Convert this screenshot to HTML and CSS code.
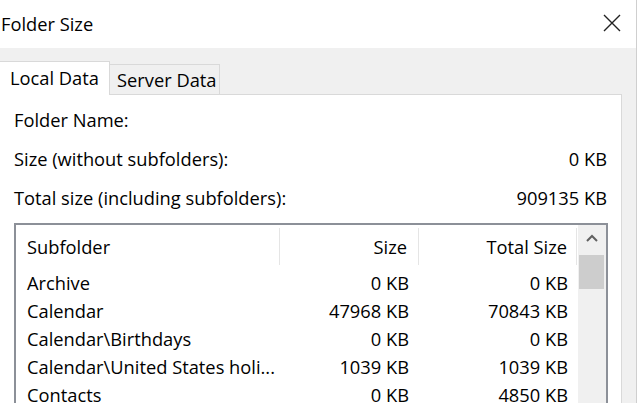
FILE: index.html
```html
<!DOCTYPE html>
<html>
<head>
<meta charset="utf-8">
<link rel="stylesheet" href="styles.css">
</head>
<body>
<div class="window">
  <div class="titlebar">
    <span class="title">Folder Size</span>
    <svg class="close" width="18" height="18" viewBox="0 0 18 18"><path d="M1 1 L17 17 M17 1 L1 17" stroke="#222" stroke-width="1.4" fill="none"/></svg>
  </div>
  <div class="body">
    <div class="tabs">
      <div class="tab active">Local Data</div>
      <div class="tab">Server Data</div>
    </div>
    <div class="panel">
      <div class="info">
        <div class="info-row"><span>Folder Name:</span><span></span></div>
        <div class="info-row"><span>Size (without subfolders):</span><span>0 KB</span></div>
        <div class="info-row"><span>Total size (including subfolders):</span><span>909135 KB</span></div>
      </div>
      <div class="list">
        <div class="table">
          <div class="row head">
            <div class="cell name">Subfolder</div>
            <div class="cell num">Size</div>
            <div class="cell num total">Total Size</div>
          </div>
          <div class="row"><div class="cell name">Archive</div><div class="cell num">0 KB</div><div class="cell num total">0 KB</div></div>
          <div class="row"><div class="cell name">Calendar</div><div class="cell num">47968 KB</div><div class="cell num total">70843 KB</div></div>
          <div class="row"><div class="cell name">Calendar\Birthdays</div><div class="cell num">0 KB</div><div class="cell num total">0 KB</div></div>
          <div class="row"><div class="cell name">Calendar\United States holi...</div><div class="cell num">1039 KB</div><div class="cell num total">1039 KB</div></div>
          <div class="row"><div class="cell name">Contacts</div><div class="cell num">0 KB</div><div class="cell num total">4850 KB</div></div>
        </div>
        <div class="scrollbar">
          <div class="arrow"><svg width="12" height="8" viewBox="0 0 12 8"><path d="M1 7 L6 2 L11 7" stroke="#606060" stroke-width="2" fill="none"/></svg></div>
          <div class="thumb"></div>
        </div>
      </div>
    </div>
  </div>
</div>
</body>
</html>
```
FILE: styles.css
```css
html, body {
  margin: 0;
  padding: 0;
  background: #f0f0f0;
}
body {
  font-family: "Open Sans", "Noto Sans", sans-serif;
  font-size: 18.3px;
  font-weight: 500;
  color: #000;
}
.window {
  width: 636px;
  height: 403px;
  border-right: 1px solid #cfcfcf;
  overflow: hidden;
  display: flex;
  flex-direction: column;
}
.titlebar {
  height: 48px;
  flex: none;
  background: #fff;
  display: flex;
  align-items: center;
  justify-content: space-between;
  padding: 0 15px 1px 1px;
  box-sizing: border-box;
}
.title {
  font-size: 18.3px;
}
.close {
  display: block;
  margin-top: -2px;
}
.body {
  flex: 1;
  padding: 13px 14px 0 0;
  display: flex;
  flex-direction: column;
}
.tabs {
  display: flex;
  align-items: flex-end;
}
.tab {
  box-sizing: border-box;
  width: 110px;
  height: 30px;
  border: 1px solid #d9d9d9;
  border-bottom: none;
  border-left: none;
  padding-left: 7px;
  display: flex;
  align-items: center;
  background: #f0f0f0;
}
.tab.active {
  height: 34px;
  background: #fff;
  padding-left: 10px;
  margin-bottom: -1px;
  position: relative;
  z-index: 1;
  padding-bottom: 2px;
}
.panel {
  flex: 1;
  background: #fff;
  border-top: 1px solid #d9d9d9;
  border-right: 1px solid #d9d9d9;
  padding: 5px 13px 0 14px;
}
.info-row {
  height: 39px;
  display: flex;
  align-items: center;
  justify-content: space-between;
  padding-right: 1px;
}
.list {
  margin-top: 6px;
  border: 2px solid #8c9098;
  border-bottom: none;
  margin-left: 0;
  display: flex;
  height: 300px;
}
.table {
  flex: 1;
}
.row {
  display: grid;
  grid-template-columns: 264px 139px 158px;
  height: 28px;
  align-items: center;
}
.row.head {
  height: 43px;
}
.cell {
  padding: 0 10px 0 11px;
  white-space: nowrap;
}
.num {
  text-align: right;
}
.total {
  padding-right: 9px;
}
.head .cell {
  height: 37px;
  display: flex;
  align-items: center;
  border-right: 1px solid #e5e5e5;
}
.head .num {
  justify-content: flex-end;
  padding-right: 11px;
}
.head .total {
  padding-right: 9px;
}
.scrollbar {
  width: 28px;
  background: #f0f0f0;
  display: flex;
  flex-direction: column;
  align-items: center;
}
.arrow {
  height: 30px;
  display: flex;
  align-items: center;
  justify-content: center;
  width: 100%;
}
.arrow svg {
  display: block;
  margin-top: -4px;
}
.thumb {
  width: 25px;
  height: 34px;
  background: #cdcdcd;
  margin-right: 2px;
}
```
